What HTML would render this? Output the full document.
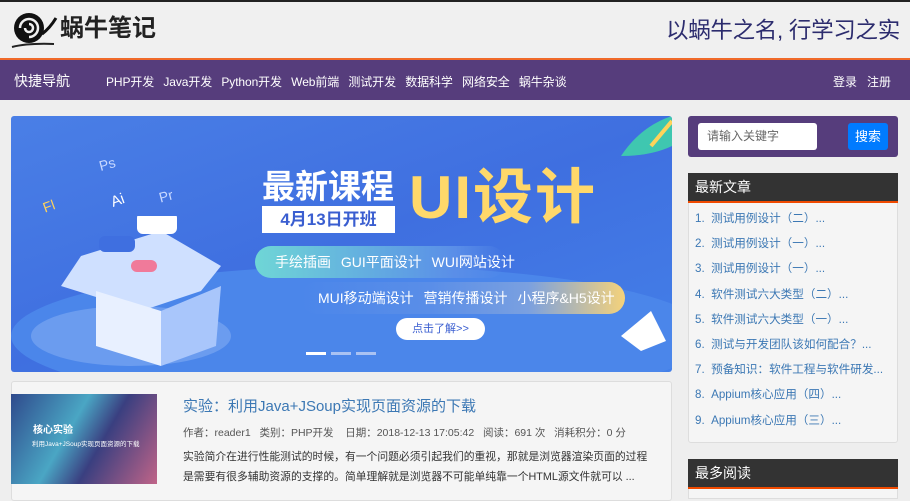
<!DOCTYPE html>
<html><head><meta charset="utf-8"><style>
*{margin:0;padding:0;box-sizing:border-box}
body{width:910px;height:494px;overflow:hidden;background:#eeeeee;font-family:"Liberation Sans","Noto Sans CJK SC",sans-serif;position:relative}
.a{position:absolute;white-space:nowrap}
</style></head><body>
<div class="a" style="left:0;top:0;width:910px;height:2px;background:#222"></div>
<div class="a" style="left:0;top:2px;width:910px;height:56px;background:#f0f0f0"></div>
<svg class="a" style="left:8px;top:10px" width="56" height="40" viewBox="0 0 56 40">
<path d="M4 37 Q20 33 46 34" stroke="#222" stroke-width="2" fill="none"/>
<circle cx="21" cy="18" r="15" fill="#111"/>
<path d="M21 18 m-9 0 a9 9 0 1 1 9 9 M21 18 m-4 0 a4 4 0 1 0 4 -4" stroke="#f0f0f0" stroke-width="2.5" fill="none"/>
<path d="M34 24 Q42 18 48 8" stroke="#111" stroke-width="3" fill="none"/>
</svg>
<div class="a" style="left:60px;top:14px;font-size:24px;line-height:30px;font-weight:bold;color:#222">蜗牛笔记</div>
<div class="a" style="left:666px;top:16px;font-size:22.5px;line-height:30px;color:#2c2c6e;letter-spacing:-0.3px">以蜗牛之名, 行学习之实</div>
<div class="a" style="left:0;top:58px;width:910px;height:2px;background:#f06a2a"></div>
<div class="a" style="left:0;top:60px;width:910px;height:40px;background:#563d7c"></div>
<div class="a" style="left:14px;top:71px;font-size:14px;color:#fff">快捷导航</div>
<div class="a" style="left:106px;top:73px;font-size:12px;color:#fff;word-spacing:6px;letter-spacing:-0.1px">PHP开发 Java开发 Python开发 Web前端 测试开发 数据科学 网络安全 蜗牛杂谈</div>
<div class="a" style="left:833px;top:73px;font-size:12px;color:#fff">登录&nbsp;&nbsp;&nbsp;注册</div>

<div class="a" style="left:11px;top:116px;width:661px;height:256px;border-radius:3px;overflow:hidden;background:linear-gradient(160deg,#4a7fe6 0%,#3f6fe0 50%,#4480e8 100%)">
<div class="a" style="left:0;top:150px;width:700px;height:140px;border-radius:50%;background:#4b86ea"></div>
<div class="a" style="left:20px;top:190px;width:200px;height:60px;border-radius:50%;background:#6b9cef"></div>
<svg class="a" style="left:40px;top:100px" width="180" height="150"><polygon points="30,40 110,15 170,50 150,75 90,95 10,70" fill="#cfe0ff"/><polygon points="45,75 110,95 110,150 45,130" fill="#e8f0ff"/><polygon points="110,95 170,70 165,130 110,150" fill="#a9c6fb"/><rect x="48" y="20" width="36" height="16" rx="6" fill="#3f6fe0"/><rect x="80" y="44" width="26" height="12" rx="6" fill="#f07a9a"/><rect x="86" y="-4" width="40" height="22" rx="6" fill="#fff"/></svg>
<div class="a" style="left:88px;top:40px;font-size:14px;color:#c9d9ff;transform:rotate(-15deg)">Ps</div>
<div class="a" style="left:100px;top:76px;font-size:15px;color:#fff;transform:rotate(-20deg)">Ai</div>
<div class="a" style="left:148px;top:72px;font-size:14px;color:#c9d9ff;transform:rotate(-15deg)">Pr</div>
<div class="a" style="left:32px;top:82px;font-size:14px;color:#ffd35a;transform:rotate(-20deg)">Fl</div>
<div class="a" style="left:251px;top:54px;font-size:33px;line-height:33px;font-weight:bold;color:#fff">最新课程</div>
<div class="a" style="left:251px;top:90px;width:133px;height:27px;background:#fff;color:#3a5ed0;font-size:17px;font-weight:bold;text-align:center;line-height:27px">4月13日开班</div>
<div class="a" style="left:398px;top:50px;font-size:60px;line-height:64px;font-weight:bold;color:#ffd86a;letter-spacing:2px">UI设计</div>
<div class="a" style="left:244px;top:130px;width:250px;height:32px;border-radius:16px;background:linear-gradient(90deg,#6fd6d6,#5a8ee8 80%,rgba(80,130,230,0));color:#fff;font-size:14px;line-height:32px;padding-left:20px;word-spacing:6px">手绘插画 GUI平面设计 WUI网站设计</div>
<div class="a" style="left:290px;top:166px;width:324px;height:32px;border-radius:16px;background:linear-gradient(90deg,rgba(80,130,230,0),#5a8ee8 40%,#7aa0e0 70%,#f5d27a);color:#fff;font-size:14px;line-height:32px;padding-left:17px;word-spacing:6px">MUI移动端设计 营销传播设计 小程序&amp;H5设计</div>
<div class="a" style="left:385px;top:202px;width:89px;height:22px;border-radius:11px;background:#fff;color:#3a5ed0;font-size:11px;text-align:center;line-height:22px">点击了解&gt;&gt;</div>
<div class="a" style="left:295px;top:236px;width:20px;height:3px;background:#fff"></div>
<div class="a" style="left:320px;top:236px;width:20px;height:3px;background:#a9c2f3"></div>
<div class="a" style="left:345px;top:236px;width:20px;height:3px;background:#a9c2f3"></div>
<svg class="a" style="left:600px;top:0" width="61" height="70"><path d="M10 40 Q30 10 61 0 L61 30 Q40 40 10 40Z" fill="#3fc7b0"/><path d="M40 30 L61 5" stroke="#ffd35a" stroke-width="4"/></svg>
<svg class="a" style="left:600px;top:190px" width="60" height="50"><polygon points="10,30 40,5 55,35 30,45" fill="#fff"/></svg>
</div>

<div class="a" style="left:11px;top:381px;width:661px;height:120px;background:#f5f5f5;border:1px solid #ddd;border-radius:3px"></div>
<div class="a" style="left:11px;top:394px;width:146px;height:90px;background:linear-gradient(120deg,#2f4a8c 0%,#4aa6c4 40%,#3a3f80 60%,#c06488 100%)"></div>
<div class="a" style="left:33px;top:421px;font-size:10px;color:#fff;font-weight:bold">核心实验</div>
<div class="a" style="left:32px;top:438px;font-size:6.5px;color:#fff">利用Java+JSoup实现页面资源的下载</div>
<div class="a" style="left:183px;top:395px;font-size:15px;color:#3c78b4">实验：利用Java+JSoup实现页面资源的下载</div>
<div class="a" style="left:183px;top:425px;font-size:10.5px;color:#555">作者：reader1&nbsp;&nbsp;&nbsp;类别：PHP开发&nbsp;&nbsp;&nbsp;&nbsp;日期：2018-12-13 17:05:42&nbsp;&nbsp;&nbsp;阅读：691 次&nbsp;&nbsp;&nbsp;消耗积分：0 分</div>
<div class="a" style="left:183px;top:447px;font-size:10.8px;color:#333;line-height:20px">实验简介在进行性能测试的时候，有一个问题必须引起我们的重视，那就是浏览器渲染页面的过程<br>是需要有很多辅助资源的支撑的。简单理解就是浏览器不可能单纯靠一个HTML源文件就可以 ...</div>

<div class="a" style="left:688px;top:116px;width:210px;height:41px;background:#563d7c;border-radius:3px"></div>
<div class="a" style="left:698px;top:123px;width:119px;height:27px;background:#fff;border-radius:3px;font-size:12px;color:#666;line-height:27px;padding-left:9px">请输入关键字</div>
<div class="a" style="left:848px;top:123px;width:40px;height:27px;background:#007bff;border-radius:3px;font-size:13px;color:#fff;line-height:27px;text-align:center">搜索</div>

<div class="a" style="left:688px;top:173px;width:210px;height:270px;background:#f5f5f5;border:1px solid #ddd;border-radius:3px"></div>
<div class="a" style="left:688px;top:173px;width:210px;height:30px;background:#333;border-bottom:2px solid #f04a00;color:#fff;font-size:14px;line-height:28px;padding-left:7px">最新文章</div>
<div class="a" style="left:695px;top:206px;font-size:11.6px;color:#3c78b4;line-height:25.2px">1.&nbsp;&nbsp;测试用例设计（二）...<br>2.&nbsp;&nbsp;测试用例设计（一）...<br>3.&nbsp;&nbsp;测试用例设计（一）...<br>4.&nbsp;&nbsp;软件测试六大类型（二）...<br>5.&nbsp;&nbsp;软件测试六大类型（一）...<br>6.&nbsp;&nbsp;测试与开发团队该如何配合？...<br>7.&nbsp;&nbsp;预备知识：软件工程与软件研发...<br>8.&nbsp;&nbsp;Appium核心应用（四）...<br>9.&nbsp;&nbsp;Appium核心应用（三）...</div>
<div class="a" style="left:688px;top:459px;width:210px;height:40px;background:#f5f5f5;border:1px solid #ddd"></div>
<div class="a" style="left:688px;top:459px;width:210px;height:30px;background:#333;border-bottom:2px solid #f04a00;color:#fff;font-size:14px;line-height:28px;padding-left:7px">最多阅读</div>
</body></html>
